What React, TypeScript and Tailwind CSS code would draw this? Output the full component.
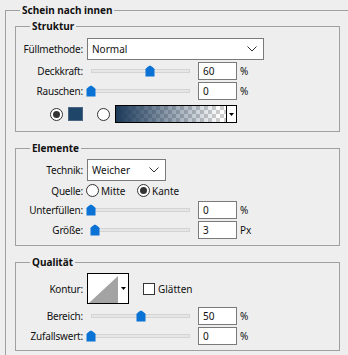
import React from "react";

const font = "font-['Noto_Sans',sans-serif]";

function Thumb({ x }: { x: number }) {
  return (
    <svg
      width="10"
      height="12"
      viewBox="0 0 10 12"
      className="absolute top-1/2 -translate-y-1/2"
      style={{ left: x - 87 - 5 }}
    >
      <path d="M5 0.5 C5.6 0.5 9.5 3.6 9.5 4.2 V11.5 H0.5 V4.2 C0.5 3.6 4.4 0.5 5 0.5 Z" fill="#0a72d4" />
    </svg>
  );
}

function Slider({ x }: { x: number }) {
  return (
    <div className="relative w-[106px] h-full flex items-center">
      <div className="ml-[4px] w-[99px] h-[4px] border border-[#d4d4d4] bg-[#e6e6e6]" />
      <Thumb x={x} />
    </div>
  );
}

function Label({ children }: { children: React.ReactNode }) {
  return <div className="w-[67px] text-right shrink-0 tracking-[-0.2px]">{children}</div>;
}

function NumBox({ value }: { value: string }) {
  return (
    <div className="ml-[5px] w-[39px] h-[18px] border border-[#7a7a7a] bg-white flex items-center pl-[4px]">
      {value}
    </div>
  );
}

function SliderRow({ label, x, value, unit, h = "h-[20px]" }: { label: string; x: number; value: string; unit: string; h?: string }) {
  return (
    <div className={`flex items-center ${h}`}>
      <Label>{label}</Label>
      <div className="ml-[4px] h-full">
        <Slider x={x} />
      </div>
      <NumBox value={value} />
      <div className="ml-[3px]">{unit}</div>
    </div>
  );
}

function Chevron() {
  return (
    <svg width="10" height="6" viewBox="0 0 10 6">
      <path d="M0.5 0.5 L5 5 L9.5 0.5" fill="none" stroke="#333" strokeWidth="1" />
    </svg>
  );
}

function Select({ text, w }: { text: string; w: string }) {
  return (
    <div className={`ml-[4px] ${w} h-[22px] border border-[#7a7a7a] bg-white flex items-center justify-between pl-[4px] pr-[6px]`}>
      <span>{text}</span>
      <Chevron />
    </div>
  );
}

function Radio({ checked }: { checked?: boolean }) {
  return (
    <div className="w-[13px] h-[13px] rounded-full border border-[#333] bg-white flex items-center justify-center shrink-0">
      {checked && <div className="w-[7px] h-[7px] rounded-full bg-[#333]" />}
    </div>
  );
}

function DownTri() {
  return (
    <svg width="5" height="3" viewBox="0 0 5 3">
      <path d="M0 0 H5 L2.5 3 Z" fill="#000" />
    </svg>
  );
}

function Group({ title, className, children }: { title: string; className: string; children: React.ReactNode }) {
  return (
    <fieldset className={`ml-[9px] w-[325px] border border-[#a0a0a0] ${className}`}>
      <legend className="ml-[14px] px-[2px] font-bold leading-[16px]">{title}</legend>
      {children}
    </fieldset>
  );
}

export default function App() {
  return (
    <div className={`w-[348px] h-[355px] overflow-hidden bg-[#eeeeee] text-[10px] leading-[14px] text-[#111] ${font}`}>
      <fieldset className="ml-[5px] mt-[2px] w-[360px] h-[420px] border border-[#a0a0a0]">
        <legend className="ml-[14px] px-[2px] font-bold leading-[16px]">Schein nach innen</legend>

        <Group title="Struktur" className="pt-[4px] pb-[7px]">
          <div className="flex items-center h-[22px]">
            <Label>Füllmethode:</Label>
            <Select text="Normal" w="w-[177px]" />
          </div>
          <div className="mt-[1px]">
            <SliderRow label="Deckkraft:" x={150} value="60" unit="%" />
          </div>
          <SliderRow label="Rauschen:" x={91} value="0" unit="%" />
          <div className="mt-[3px] h-[20px] flex items-center">
            <div className="ml-[34px]">
              <Radio checked />
            </div>
            <div className="ml-[5px] w-[15px] h-[14px] bg-[#1f4568] border border-[#4a6683]" />
            <div className="ml-[14px]">
              <Radio />
            </div>
            <div className="ml-[5px] w-[122px] h-[18px] border border-black flex">
              <svg width="110" height="16" className="block">
                <defs>
                  <pattern id="chk" width="8" height="8" patternUnits="userSpaceOnUse">
                    <rect width="8" height="8" fill="#ffffff" />
                    <rect width="4" height="4" fill="#cfcfcf" />
                    <rect x="4" y="4" width="4" height="4" fill="#cfcfcf" />
                  </pattern>
                  <linearGradient id="grd" x1="0" x2="1" y1="0" y2="0">
                    <stop offset="0" stopColor="#1c3a5a" stopOpacity="1" />
                    <stop offset="0.95" stopColor="#1c3a5a" stopOpacity="0" />
                  </linearGradient>
                </defs>
                <rect width="110" height="16" fill="url(#chk)" />
                <rect width="110" height="16" fill="url(#grd)" />
              </svg>
              <div className="flex-1 border-l border-black bg-white flex items-center justify-center">
                <DownTri />
              </div>
            </div>
          </div>
        </Group>

        <Group title="Elemente" className="mt-[8px] pt-[3px] pb-[5px]">
          <div className="flex items-center h-[22px]">
            <Label>Technik:</Label>
            <Select text="Weicher" w="w-[79px]" />
          </div>
          <div className="flex items-center h-[19px]">
            <Label>Quelle:</Label>
            <div className="ml-[3px] w-[51px] flex items-center">
              <Radio />
              <span className="ml-[2px]">Mitte</span>
            </div>
            <Radio checked />
            <span className="ml-[2px]">Kante</span>
          </div>
          <SliderRow label="Unterfüllen:" x={91} value="0" unit="%" />
          <SliderRow label="Größe:" x={95} value="3" unit="Px" />
        </Group>

        <Group title="Qualität" className="mt-[8px] pt-[3px] pb-[4px]">
          <div className="flex items-center h-[31px]">
            <Label>Kontur:</Label>
            <div className="ml-[4px] w-[42px] h-[31px] border border-black bg-white flex">
              <svg width="31" height="29" viewBox="0 0 31 29" className="block">
                <path d="M1 29 L30 2 V29 Z" fill="#a3a3a3" />
              </svg>
              <div className="flex-1 flex items-center justify-center">
                <DownTri />
              </div>
            </div>
            <div className="ml-[14px] w-[12px] h-[12px] border border-[#333] bg-white" />
            <span className="ml-[3px]">Glätten</span>
          </div>
          <div className="mt-[2px]">
            <SliderRow label="Bereich:" x={141} value="50" unit="%" />
          </div>
          <SliderRow label="Zufallswert:" x={91} value="0" unit="%" />
        </Group>
      </fieldset>
    </div>
  );
}
